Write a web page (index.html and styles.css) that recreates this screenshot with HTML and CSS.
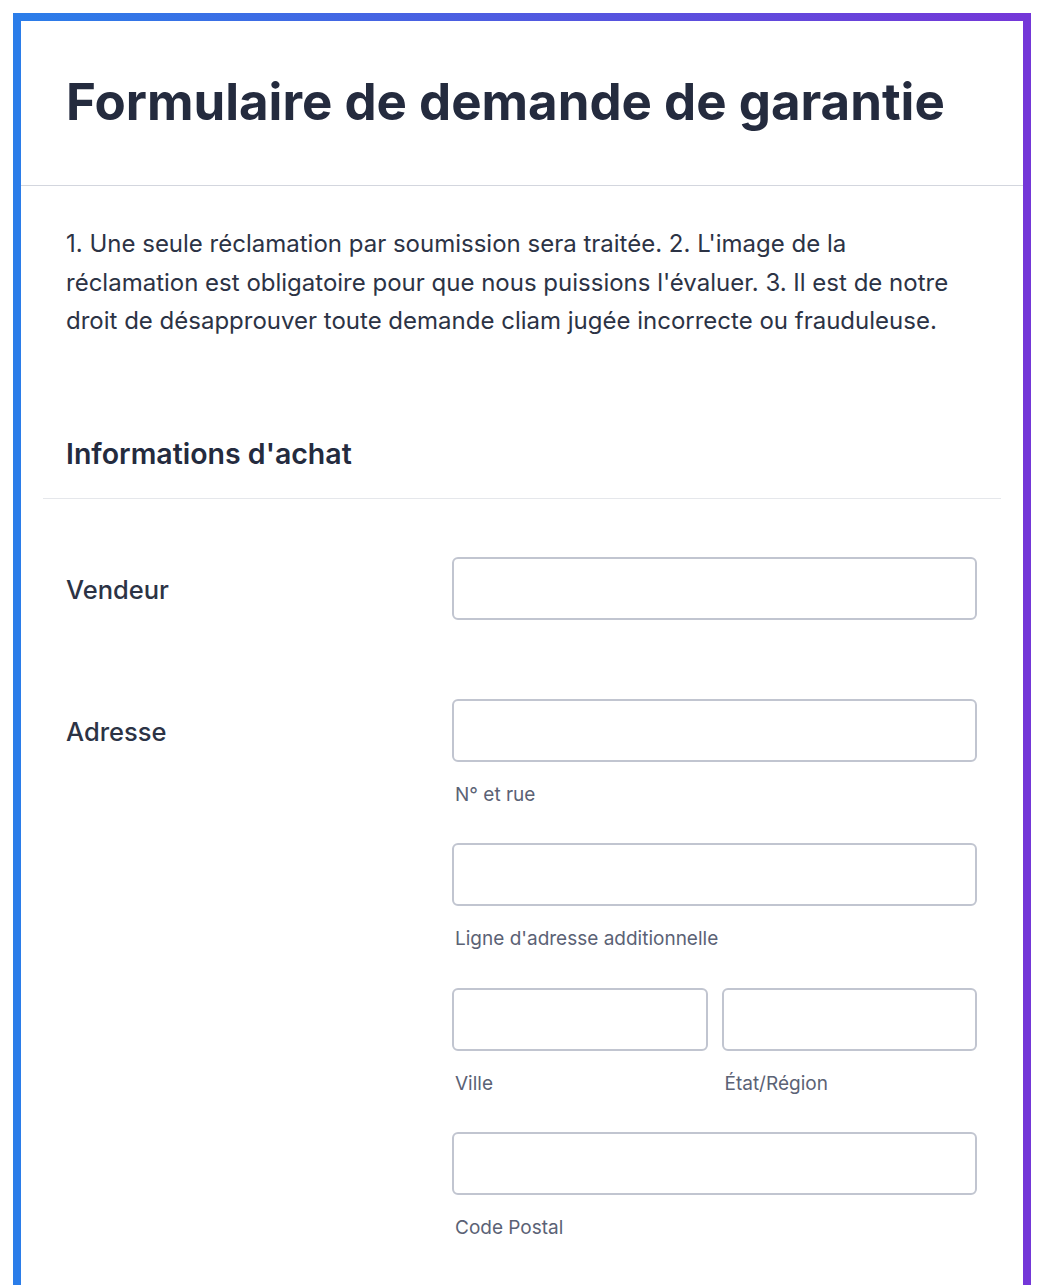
FILE: index.html
```html
<!DOCTYPE html>
<html lang="fr">
<head>
    <meta charset="UTF-8">
    <title>Formulaire de demande de garantie</title>
    <link rel="stylesheet" href="styles.css">
</head>
<body>
<div class="form-card">
  <div class="form-header">
    <h1 class="form-title">Formulaire de demande de garantie</h1>
  </div>

  <p class="form-intro">1. Une seule réclamation par soumission sera traitée. 2. L'image de la réclamation est obligatoire pour que nous puissions l'évaluer. 3. Il est de notre droit de désapprouver toute demande cliam jugée incorrecte ou frauduleuse.</p>

  <div class="form-section">
    <h2 class="section-title">Informations d'achat</h2>

    <div class="form-row">
      <label class="row-label" for="vendeur">Vendeur</label>
      <div class="row-fields">
        <div class="field-group">
          <input class="text-input" id="vendeur" type="text">
        </div>
      </div>
    </div>

    <div class="form-row">
      <label class="row-label" for="rue">Adresse</label>
      <div class="row-fields">
        <div class="field-group">
          <input class="text-input" id="rue" type="text">
          <span class="sub-label">N° et rue</span>
        </div>
        <div class="field-group">
          <input class="text-input" type="text">
          <span class="sub-label">Ligne d'adresse additionnelle</span>
        </div>
        <div class="field-pair">
          <div class="field-group">
            <input class="text-input" type="text">
            <span class="sub-label">Ville</span>
          </div>
          <div class="field-group">
            <input class="text-input" type="text">
            <span class="sub-label">État/Région</span>
          </div>
        </div>
        <div class="field-group">
          <input class="text-input" type="text">
          <span class="sub-label">Code Postal</span>
        </div>
      </div>
    </div>
  </div>
</div>
</body>
</html>
```

FILE: styles.css
```css
/* page + card with the gradient frame */
body {
  margin: 0;
  padding: 13px 13px 0 13px;
  background: #ffffff;
  font-family: Inter, "Noto Sans", sans-serif;
  color: #2c3345;
}

.form-card {
  border: 8px solid transparent;
  border-bottom: 0;
  border-image: linear-gradient(to right, #2b7de9, #7437d8) 1;
  background: #ffffff;
  min-height: 1300px;
}

.form-header {
  padding: 46px 45px 48px 45px;
  border-bottom: 1px solid #d3d6de;
}

.form-title {
  margin: 0;
  font-size: 51px;
  font-weight: 700;
  line-height: 70px;
  color: #242b3e;
  white-space: nowrap;
}

.form-intro {
  margin: 0;
  padding: 39px 45px 0 45px;
  font-size: 24px;
  line-height: 38.5px;
  color: #2c3345;
}

/* section */
.form-section {
  margin: 93px 22px 0 22px;
}

.section-title {
  margin: 0;
  padding: 0 24px 24px 23px;
  font-size: 28.5px;
  font-weight: 600;
  line-height: 40px;
  color: #242b3e;
  border-bottom: 1px solid #e5e7eb;
}

.form-row {
  display: flex;
  padding: 0 24px 0 23px;
  margin-top: 58px;
}

.form-row + .form-row {
  margin-top: 44.5px;
}

.row-label {
  width: 386px;
  flex-shrink: 0;
  padding-top: 2px;
  font-size: 25.5px;
  font-weight: 500;
  line-height: 62px;
  color: #2c3345;
}

.row-fields {
  flex: 1;
  display: flex;
  flex-direction: column;
}

.field-group {
  display: flex;
  flex-direction: column;
  margin-bottom: 34.5px;
  min-width: 0;
}

.field-pair {
  display: flex;
  gap: 14px;
}

.field-pair .field-group {
  flex: 1;
}

.text-input {
  box-sizing: border-box;
  width: 100%;
  height: 63px;
  margin: 0;
  border: 2px solid #c1c5d0;
  border-radius: 6px;
  background: #ffffff;
  font-family: inherit;
  font-size: 20px;
  padding: 0 14px;
}

.sub-label {
  margin-top: 19px;
  padding-left: 3px;
  font-size: 19px;
  line-height: 28px;
  color: #5b6275;
}
```
